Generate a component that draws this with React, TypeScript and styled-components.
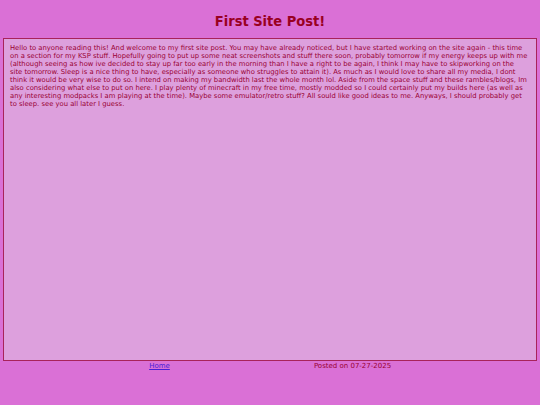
import React from "react";
import styled, { createGlobalStyle } from "styled-components";

const GlobalStyle = createGlobalStyle`
  html, body {
    margin: 0;
    padding: 0;
    background: #da70d6;
  }
  body {
    font-family: "DejaVu Sans", Verdana, sans-serif;
    color: #990033;
  }
`;

const Page = styled.div`
  width: 540px;
  height: 405px;
  box-sizing: border-box;
  padding: 12px 3px 0 3px;
`;

const Title = styled.h1`
  margin: 0 0 8px 0;
  text-align: center;
  font-family: "DejaVu Sans Condensed", "DejaVu Sans", Tahoma, sans-serif;
  font-size: 14.5px;
  line-height: 18px;
  font-weight: bold;
  color: #990022;
`;

const PostBox = styled.div`
  box-sizing: border-box;
  height: 323px;
  background: #dda0dd;
  border: 1.5px solid #a8235a;
  padding: 5px 8.4px 5px 6px;
  font-size: 6.8px;
  line-height: 8px;
  color: #990033;
`;

const Footer = styled.div`
  display: grid;
  grid-template-columns: 60px 193px 193px;
  padding-top: 1px;
  font-size: 7px;
  line-height: 9px;
`;

const FooterCell = styled.div<{ $col: number }>`
  grid-column: ${(p) => p.$col};
  text-align: center;
`;

const HomeLink = styled.a`
  color: #4b1fd6;
  text-decoration: underline;
`;

const postText =
  "Hello to anyone reading this! And welcome to my first site post. You may have already noticed, but I have started working on the site again - this time on a section for my KSP stuff. Hopefully going to put up some neat screenshots and stuff there soon, probably tomorrow if my energy keeps up with me (although seeing as how ive decided to stay up far too early in the morning than I have a right to be again, I think I may have to skipworking on the site tomorrow. Sleep is a nice thing to have, especially as someone who struggles to attain it). As much as I would love to share all my media, I dont think it would be very wise to do so. I intend on making my bandwidth last the whole month lol. Aside from the space stuff and these rambles/blogs, Im also considering what else to put on here. I play plenty of minecraft in my free time, mostly modded so I could certainly put my builds here (as well as any interesting modpacks I am playing at the time). Maybe some emulator/retro stuff? All sould like good ideas to me. Anyways, I should probably get to sleep. see you all later I guess.";

export default function App() {
  return (
    <>
      <GlobalStyle />
      <Page>
        <Title>First Site Post!</Title>
        <PostBox>{postText}</PostBox>
        <Footer>
          <FooterCell $col={2}>
            <HomeLink href="#">Home</HomeLink>
          </FooterCell>
          <FooterCell $col={3}>Posted on 07-27-2025</FooterCell>
        </Footer>
      </Page>
    </>
  );
}
